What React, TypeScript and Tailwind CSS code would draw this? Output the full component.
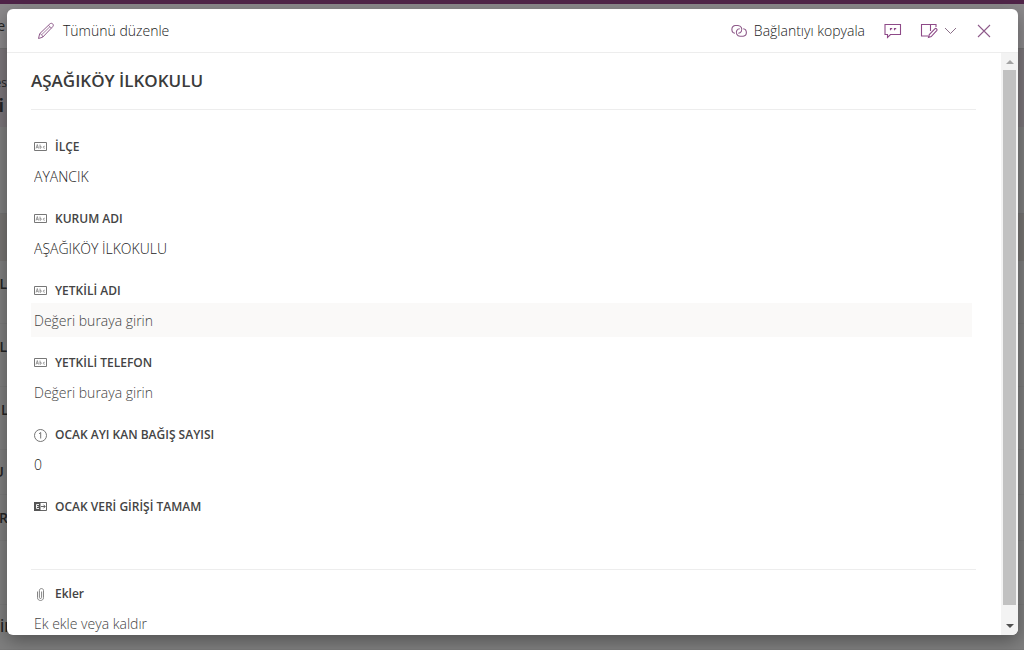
import type { ReactNode } from "react";

type Field = {
    id: string;
    label: string;
    icon: ReactNode;
    value?: string;
    placeholder?: string;
    active?: boolean;
};

const PencilIcon = () => (
    <svg viewBox="0 0 18 18" className="size-[18px]" fill="none" stroke="#8e5a8a" strokeLinejoin="round">
        <path d="M1.5 16.5l1.2-4.8L12.9 1.9c.9-.8 2-.8 2.8 0s.9 1.9 0 2.8L5.7 15.2z" />
        <path d="M11.5 3.3l3 3M2.7 11.7c1.5.1 2.8 1.5 3 3.3M4.6 12.800L13 4.600" strokeWidth="0.8" />
    </svg>
);

const LinkIcon = () => (
    <svg viewBox="0 0 18 14" className="h-[14px] w-[18px]" fill="none" stroke="#8e5a8a" strokeWidth="1.1">
        <path d="M5 9.300A4 4 0 0 1 5 1.500h3a4 4 0 0 1 3.300 6C10.700 8.500 9.500 9.200 8.300 9.200" />
        <path d="M13.200 4.700a3.800 3.800 0 0 1 0 7.500h-3.200a3.800 3.800 0 0 1-3.200-5.700C7.500 5.300 8.700 4.800 9.800 4.800" />
    </svg>
);

const CommentIcon = () => (
    <svg viewBox="0 0 18 16" className="h-4 w-[18px]" fill="none" stroke="#8e4a88" strokeWidth="1.1">
        <path d="M1 1.500h15.500v10H6.500L3.500 14.500v-3H1z" />
        <path d="M6.500 5v2.200M7.600 5v1.200M10.500 5v2.200M11.600 5v1.200" strokeWidth="1.200" />
    </svg>
);

const EditPanelIcon = () => (
    <svg viewBox="0 0 18 16" className="h-4 w-[18px]" fill="none" stroke="#8e4a88" strokeWidth="1.1">
        <path d="M8 13H1.500V1.500h14.500v2.500M10.500 1.500v6.500" />
        <path d="M8.500 14.500l.8-3 5.500-5.700c1.200-1 2.900.5 1.900 1.800l-5.500 6z" />
    </svg>
);

const TextIcon = () => (
    <svg viewBox="0 0 13 11" className="h-[11px] w-[13px]" fill="none" stroke="#777">
        <path d="M.5.5h12v8H.5z" />
        <path d="M2 6.500l1.300-4 1.200 4M2.500 5.300h1.700M6 2.500v4M6 4.500c1.800-.8 1.800 2 0 1.600M10.800 4.300c-2-.7-2 2.500 0 1.900" strokeWidth="0.7" />
    </svg>
);

const NumberIcon = () => (
    <svg viewBox="0 0 13 13" className="size-[13px]" fill="none" stroke="#666" strokeWidth="0.9">
        <circle cx="6.500" cy="6.500" r="6" />
        <path d="M5 4.800l1.700-1.300v6" />
    </svg>
);

const ChoiceIcon = () => (
    <svg viewBox="0 0 13 11" className="h-[11px] w-[13px]" fill="none" stroke="#555">
        <path d="M.5.5h12v8H.5z" strokeWidth="0.9" />
        <path d="M0 0h6.500v9H0z" fill="#555" stroke="none" />
        <path d="M5 2.500H2.500v4H5M2.500 4.500h2" stroke="#fff" strokeWidth="0.9" />
        <path d="M7 4.500h4M9.500 2.700l1.700 1.800-1.700 1.800" strokeWidth="0.9" />
    </svg>
);

const ClipIcon = () => (
    <svg viewBox="0 0 7 13" className="h-[13px] w-[7px]" fill="none" stroke="#777" strokeWidth="0.9">
        <path d="M4.600 3.500v6c0 1.300-2.200 1.300-2.200 0V2.500c0-2.600 4.100-2.600 4.100 0v7.200c0 3.700-6 3.700-6 0V3.500" />
    </svg>
);

const fields: Field[] = [
    { id: "ilce", label: "İLÇE", icon: <TextIcon />, value: "AYANCIK" },
    { id: "kurum", label: "KURUM ADI", icon: <TextIcon />, value: "AŞAĞIKÖY İLKOKULU" },
    { id: "yetkili", label: "YETKİLİ ADI", icon: <TextIcon />, placeholder: "Değeri buraya girin", active: true },
    { id: "telefon", label: "YETKİLİ TELEFON", icon: <TextIcon />, placeholder: "Değeri buraya girin" },
    { id: "ocak", label: "OCAK AYI KAN BAĞIŞ SAYISI", icon: <NumberIcon />, value: "0" },
    { id: "tamam", label: "OCAK VERİ GİRİŞİ TAMAM", icon: <ChoiceIcon />, value: "" },
];

const rows = [
    { text: "L", className: "h-[63px] pb-4", textClass: "w-[7px] justify-end" },
    { text: "L", className: "h-[63px] pb-4", textClass: "w-[7px] justify-end" },
    { text: "L", className: "h-[63px] pb-4", textClass: "w-[7px] pl-px" },
    { text: "U", className: "h-[45px]", textClass: "w-1 justify-end" },
    { text: "ER", className: "h-[46px]", textClass: "w-2 justify-end" },
    { text: "", className: "h-16", textClass: "" },
    { text: "İL", className: "h-[45px]", textClass: "w-[7px]" },
];

const ListPage = () => (
    <div aria-hidden="true" className="flex h-full flex-col bg-[#7f7f7f] text-[#242424]">
        <div className="h-1 shrink-0 bg-[#4f2448]" />
        <div className="flex h-[45px] shrink-0 items-center border-b border-[#737373] bg-[#8b898b] text-sm">
            <span className="flex w-[5px] justify-end overflow-hidden">e</span>
        </div>
        <div className="flex h-[78px] shrink-0 flex-col justify-end bg-[#7b767a] pb-2">
            <span className="flex w-[7px] justify-end overflow-hidden text-xs">es</span>
            <span className="flex w-1 justify-end overflow-hidden text-lg font-bold">i</span>
        </div>
        <div className="h-[87px] shrink-0 border-b border-[#737373]" />
        <div className="h-[47px] shrink-0 bg-[#777573]" />
        {rows.map((row, i) => (
            <div key={i} className={`flex shrink-0 items-center border-b border-[#7a7a7a] text-sm font-semibold ${row.className}`}>
                <span className={`flex overflow-hidden ${row.textClass}`}>{row.text}</span>
            </div>
        ))}
    </div>
);

const Toolbar = () => (
    <header className="flex h-11 shrink-0 items-center border-b border-[#ededed] pr-[27px] pl-[30px] text-sm font-light text-[#222]">
        <button className="flex items-center gap-2">
            <PencilIcon />
            Tümünü düzenle
        </button>
        <button className="ml-auto flex items-center gap-[6px]">
            <LinkIcon />
            Bağlantıyı kopyala
        </button>
        <button aria-label="Yorumlar" className="ml-[19px]">
            <CommentIcon />
        </button>
        <button aria-label="Formu düzenle" className="ml-[18px] flex items-center gap-[6px]">
            <EditPanelIcon />
            <svg viewBox="0 0 13 8" className="h-2 w-[13px]" fill="none" stroke="#8a6f88">
                <path d="M1 1l5.500 5.500L12 1" />
            </svg>
        </button>
        <button aria-label="Kapat" className="ml-5">
            <svg viewBox="0 0 14 14" className="size-[14px]" fill="none" stroke="#8e5a8a" strokeWidth="1.1">
                <path d="M1 1l12 12M13 1L1 13" />
            </svg>
        </button>
    </header>
);

const FieldRow = ({ field }: { field: Field }) => (
    <div className="mb-4 pr-1">
        <label htmlFor={field.id} className="flex h-5 items-center gap-2 pl-[3px] text-xs font-semibold text-[#444]">
            {field.icon}
            {field.label}
        </label>
        <input
            id={field.id}
            type="text"
            defaultValue={field.value}
            placeholder={field.placeholder}
            className={`mt-[2px] block h-[34px] w-full px-[3px] text-sm font-light text-[#222] outline-none placeholder:text-[#444] ${field.active ? "bg-[#faf9f8]" : ""}`}
        />
    </div>
);

const Scrollbar = () => (
    <div className="flex w-[17px] shrink-0 flex-col items-center bg-[#f3f3f3]">
        <button aria-label="Yukarı kaydır" className="flex h-[17px] items-center">
            <svg viewBox="0 0 8 4" className="h-1 w-2" fill="#a3a3a3">
                <path d="M0 4l4-4 4 4z" />
            </svg>
        </button>
        <div className="w-[13px] flex-1 bg-[#c1c1c1]" />
        <button aria-label="Aşağı kaydır" className="mt-3 flex h-[18px] items-center">
            <svg viewBox="0 0 8 4" className="h-1 w-2" fill="#505050">
                <path d="M0 0l4 4 4-4z" />
            </svg>
        </button>
    </div>
);

export default function App() {
    return (
        <div className="relative h-screen overflow-hidden font-['Open_Sans','Noto_Sans',sans-serif]">
            <ListPage />
            <div className="absolute inset-0 flex pt-[9px] pr-[6px] pb-[15px] pl-[7px]">
                <div role="dialog" aria-label="AŞAĞIKÖY İLKOKULU" className="flex flex-1 flex-col overflow-hidden rounded-md bg-white shadow-[0_6px_18px_rgba(0,0,0,0.35)]">
                    <Toolbar />
                    <div className="flex min-h-0 flex-1">
                        <main className="flex-1 overflow-hidden pr-[25px] pl-6">
                            <h1 className="flex h-[57px] items-center border-b border-[#ededed] text-[17px] font-semibold text-[#3b3b3b]">
                                AŞAĞIKÖY İLKOKULU
                            </h1>
                            <div className="pt-[27px]">
                                {fields.map((field) => (
                                    <FieldRow key={field.id} field={field} />
                                ))}
                            </div>
                            <section className="border-t border-[#ededed] pt-[14px]">
                                <h2 className="flex h-5 items-center gap-[11px] pl-[6px] text-xs font-semibold text-[#444]">
                                    <ClipIcon />
                                    Ekler
                                </h2>
                                <button className="mt-[3px] flex h-[34px] items-center pl-[3px] text-sm font-light text-[#444]">
                                    Ek ekle veya kaldır
                                </button>
                            </section>
                        </main>
                        <Scrollbar />
                    </div>
                </div>
            </div>
        </div>
    );
}
